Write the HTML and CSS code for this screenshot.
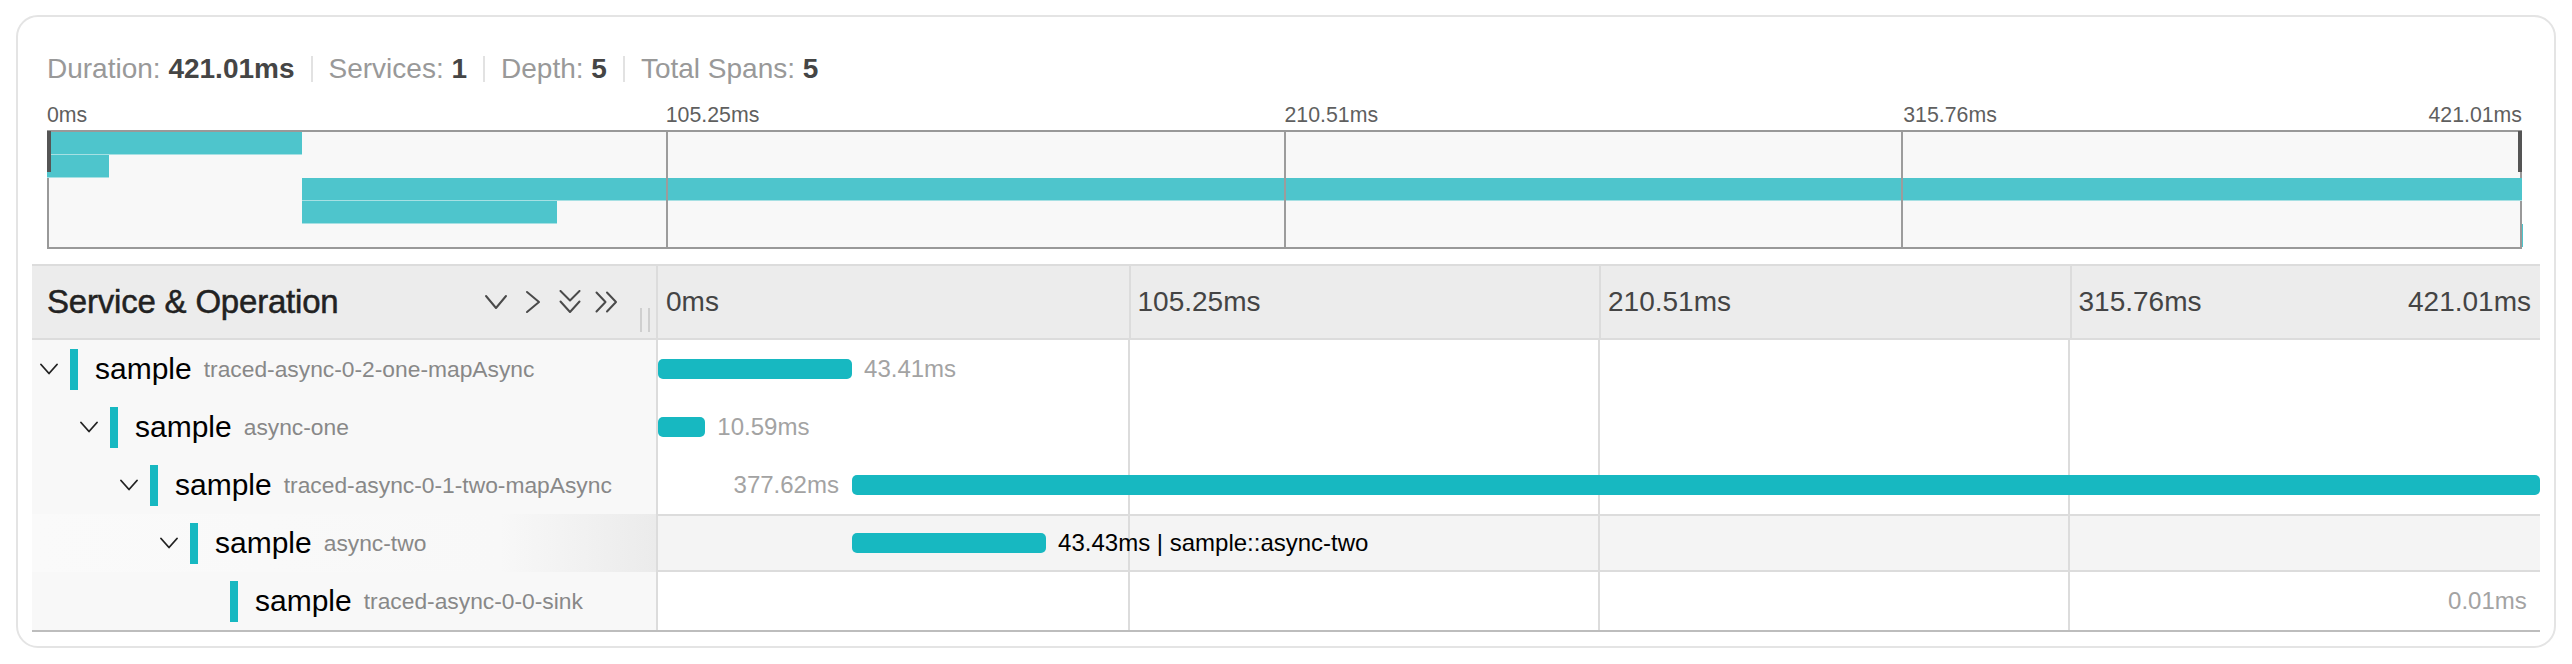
FILE: index.html
```html
<!DOCTYPE html>
<html>
<head>
<meta charset="utf-8">
<title>Trace</title>
<link rel="stylesheet" href="styles.css">
</head>
<body>
<div class="card">
  <div class="stats">
    <span class="stat"><span class="k">Duration:</span> <b>421.01ms</b></span>
    <span class="sep"></span>
    <span class="stat"><span class="k">Services:</span> <b>1</b></span>
    <span class="sep"></span>
    <span class="stat"><span class="k">Depth:</span> <b>5</b></span>
    <span class="sep"></span>
    <span class="stat"><span class="k">Total Spans:</span> <b>5</b></span>
  </div>

  <div class="minimap">
    <div class="mm-ticks">
      <span>0ms</span>
      <span>105.25ms</span>
      <span>210.51ms</span>
      <span class="mm-last"><span>315.76ms</span><span>421.01ms</span></span>
    </div>
    <div class="mm-box">
      <div class="mm-row"><span class="mm-span" style="left:0%;width:10.311%"></span></div>
      <div class="mm-row"><span class="mm-span" style="left:0%;width:2.515%"></span></div>
      <div class="mm-row"><span class="mm-span" style="left:10.306%;width:89.694%"></span></div>
      <div class="mm-row"><span class="mm-span" style="left:10.306%;width:10.316%"></span></div>
      <div class="mm-row"><span class="mm-span" style="left:99.99%;width:0.01%"></span></div>
      <div class="mm-grid"></div>
      <span class="mm-handle mm-handle-left"></span>
      <span class="mm-handle mm-handle-right"></span>
    </div>
  </div>

  <div class="timeline">
    <div class="tl-header">
      <div class="hdr-name">
        <span class="hdr-title">Service &amp; Operation</span>
        <span class="hdr-icons">
          <svg class="hicon" viewBox="0 0 24 24"><polyline points="2,6 12,18 22,6"/></svg>
          <svg class="hicon" viewBox="0 0 24 24"><polyline points="6,2 18,12 6,22"/></svg>
          <svg class="hicon" viewBox="0 0 24 24"><polyline points="2.5,1 12,10.5 21.5,1"/><polyline points="2.5,11.5 12,22 21.5,11.5"/></svg>
          <svg class="hicon" viewBox="0 0 24 24"><polyline points="1.5,2.5 10.5,12 1.5,21.5"/><polyline points="12,2.5 21,12 12,21.5"/></svg>
        </span>
        <span class="resizer"></span>
      </div>
      <div class="hdr-ticks">
        <span class="tick">0ms</span>
        <span class="tick">105.25ms</span>
        <span class="tick">210.51ms</span>
        <span class="tick tick-last"><span>315.76ms</span><span>421.01ms</span></span>
      </div>
    </div>

    <div class="tl-row">
      <div class="name-cell">
        <span class="toggle"><svg viewBox="0 0 18 12"><polyline points="1,1.5 9,10.5 17,1.5"/></svg></span>
        <span class="svc-bar"></span>
        <span class="svc">sample</span><span class="op">traced-async-0-2-one-mapAsync</span>
      </div>
      <div class="bar-cell">
        <div class="span" style="left:0%;width:10.311%"><span class="bar"></span><span class="lbl lbl-right">43.41ms</span></div>
      </div>
    </div>

    <div class="tl-row">
      <div class="name-cell">
        <span class="indent depth-1"></span>
        <span class="toggle"><svg viewBox="0 0 18 12"><polyline points="1,1.5 9,10.5 17,1.5"/></svg></span>
        <span class="svc-bar"></span>
        <span class="svc">sample</span><span class="op">async-one</span>
      </div>
      <div class="bar-cell">
        <div class="span" style="left:0%;width:2.515%"><span class="bar"></span><span class="lbl lbl-right">10.59ms</span></div>
      </div>
    </div>

    <div class="tl-row">
      <div class="name-cell">
        <span class="indent depth-2"></span>
        <span class="toggle"><svg viewBox="0 0 18 12"><polyline points="1,1.5 9,10.5 17,1.5"/></svg></span>
        <span class="svc-bar"></span>
        <span class="svc">sample</span><span class="op">traced-async-0-1-two-mapAsync</span>
      </div>
      <div class="bar-cell">
        <div class="span" style="left:10.306%;width:89.694%"><span class="bar"></span><span class="lbl lbl-left">377.62ms</span></div>
      </div>
    </div>

    <div class="tl-row is-hover">
      <div class="name-cell">
        <span class="indent depth-3"></span>
        <span class="toggle"><svg viewBox="0 0 18 12"><polyline points="1,1.5 9,10.5 17,1.5"/></svg></span>
        <span class="svc-bar"></span>
        <span class="svc">sample</span><span class="op">async-two</span>
      </div>
      <div class="bar-cell">
        <div class="span" style="left:10.306%;width:10.316%"><span class="bar"></span><span class="lbl lbl-right lbl-dark">43.43ms | sample::async-two</span></div>
      </div>
    </div>

    <div class="tl-row">
      <div class="name-cell">
        <span class="indent depth-4"></span>
        <span class="toggle"></span>
        <span class="svc-bar"></span>
        <span class="svc">sample</span><span class="op">traced-async-0-0-sink</span>
      </div>
      <div class="bar-cell">
        <div class="span" style="left:99.99%;width:0.01%"><span class="bar bar-tiny"></span><span class="lbl lbl-left">0.01ms</span></div>
      </div>
    </div>
  </div>
</div>
</body>
</html>
```

FILE: styles.css
```css
* {
  box-sizing: border-box;
}

html, body {
  margin: 0;
  padding: 0;
  background: #ffffff;
}

body {
  font-family: "Liberation Sans", Arial, Helvetica, sans-serif;
  color: #000;
  padding: 15px 16px 0 16px;
}

.card {
  height: 633px;
  border: 2px solid #e4e4e4;
  border-radius: 22px;
  padding: 36px 14px 0 14px;
}

/* ---------- stats line ---------- */
.stats {
  display: flex;
  align-items: center;
  height: 32px;
  margin-left: 15px;
  font-size: 28px;
  line-height: 32px;
  white-space: pre;
}

.stat .k {
  color: #999;
}

.stat b {
  color: #454545;
  font-weight: bold;
}

.sep {
  width: 2px;
  height: 26px;
  background: #e2e2e2;
  margin: 0 16px;
}

/* ---------- minimap ---------- */
.minimap {
  margin: 18px 18px 0 15px;
}

.mm-ticks {
  display: grid;
  grid-template-columns: repeat(4, 1fr);
  height: 24px;
  font-size: 21.3px;
  line-height: 24px;
  color: #5f5f5f;
}

.mm-last {
  display: flex;
  justify-content: space-between;
}

.mm-box {
  position: relative;
  margin-top: 3px;
  height: 119px;
  border: 2px solid #999;
  background: #f8f8f8;
}

.mm-row {
  position: relative;
  height: 23px;
  margin: 0 -2px;
}

.mm-span {
  position: absolute;
  top: 0;
  bottom: 0;
  background: #4ec5cc;
  box-shadow: inset 0 -1px 0 #a6e0e3;
}

.mm-grid {
  position: absolute;
  inset: 0;
  background-image:
    linear-gradient(#9c9c9c, #9c9c9c),
    linear-gradient(#9c9c9c, #9c9c9c),
    linear-gradient(#9c9c9c, #9c9c9c);
  background-size: 2px 100%;
  background-position: 25% 0, 50% 0, 75% 0;
  background-repeat: no-repeat;
}

.mm-handle {
  position: absolute;
  top: -1px;
  width: 4px;
  height: 41px;
  background: #555;
}

.mm-handle-left {
  left: -2px;
}

.mm-handle-right {
  right: -2px;
}

/* ---------- timeline ---------- */
.timeline {
  margin-top: 15px;
  border-bottom: 2px solid #bdbdbd;
}

.tl-header {
  display: flex;
  height: 76px;
  background: #ececec;
  border-top: 2px solid #dcdcdc;
  border-bottom: 2px solid #dcdcdc;
}

.hdr-name {
  position: relative;
  flex: none;
  width: 626px;
  display: flex;
  align-items: center;
  padding: 0 37px 0 15px;
  border-right: 2px solid #dcdcdc;
}

.hdr-title {
  font-size: 33px;
  color: #222;
  -webkit-text-stroke: 0.5px #222;
  letter-spacing: -0.2px;
}

.hdr-icons {
  margin-left: auto;
  display: flex;
  gap: 13px;
}

.hicon {
  width: 24px;
  height: 24px;
  fill: none;
  stroke: #4a4a4a;
  stroke-width: 2;
  stroke-linecap: round;
  stroke-linejoin: round;
}

.resizer {
  position: absolute;
  right: 6px;
  top: 42px;
  width: 10px;
  height: 24px;
  border-left: 2px solid #cfcfcf;
  border-right: 2px solid #cfcfcf;
}

.hdr-ticks {
  flex: 1;
  display: grid;
  grid-template-columns: repeat(4, 1fr);
}

.tick {
  display: flex;
  align-items: center;
  padding-left: 8px;
  font-size: 28px;
  color: #444;
}

.tick + .tick {
  border-left: 2px solid #dcdcdc;
  padding-left: 7px;
}

.tick-last {
  justify-content: space-between;
  padding-right: 9px;
}

/* ---------- rows ---------- */
.tl-row {
  display: flex;
  height: 58px;
}

.name-cell {
  flex: none;
  width: 626px;
  display: flex;
  align-items: center;
  background: #f8f8f8;
  border-right: 2px solid #dcdcdc;
  white-space: nowrap;
}

.indent {
  flex: none;
}

.depth-1 { width: 40px; }
.depth-2 { width: 80px; }
.depth-3 { width: 120px; }
.depth-4 { width: 160px; }

.toggle {
  flex: none;
  width: 34px;
  display: flex;
  justify-content: center;
  align-items: center;
}

.toggle svg {
  width: 18px;
  height: 12px;
  fill: none;
  stroke: #222;
  stroke-width: 1.8;
  stroke-linecap: round;
  stroke-linejoin: round;
}

.svc-bar {
  flex: none;
  width: 8px;
  height: 41px;
  margin-left: 4px;
  background: #17b8c1;
}

.svc {
  margin-left: 17px;
  font-size: 30px;
  color: #000;
}

.op {
  margin-left: 12px;
  font-size: 22.8px;
  color: #888;
}

.bar-cell {
  flex: 1;
  position: relative;
  background-color: #fff;
  background-image:
    linear-gradient(#dcdcdc, #dcdcdc),
    linear-gradient(#dcdcdc, #dcdcdc),
    linear-gradient(#dcdcdc, #dcdcdc);
  background-size: 2px 100%;
  background-position: 25% 0, 50% 0, 75% 0;
  background-repeat: no-repeat;
}

.is-hover .name-cell {
  background: linear-gradient(90deg, #fafafa, #f8f8f8 75%, #ebebeb);
}

.is-hover .bar-cell {
  background-color: #f4f4f4;
  box-shadow: inset 0 2px 0 #dcdcdc, inset 0 -2px 0 #dcdcdc;
}

.span {
  position: absolute;
  top: 19px;
  height: 20px;
}

.bar {
  display: block;
  height: 20px;
  border-radius: 5px;
  background: #17b8c1;
}

.bar-tiny {
  background: transparent;
}

.lbl {
  position: absolute;
  top: 50%;
  transform: translateY(-50%);
  font-size: 24px;
  line-height: 28px;
  color: #a3a3a3;
  white-space: nowrap;
}

.lbl-right {
  left: calc(100% + 12px);
}

.lbl-left {
  right: calc(100% + 13px);
}

.lbl-dark {
  color: #000;
}
```
